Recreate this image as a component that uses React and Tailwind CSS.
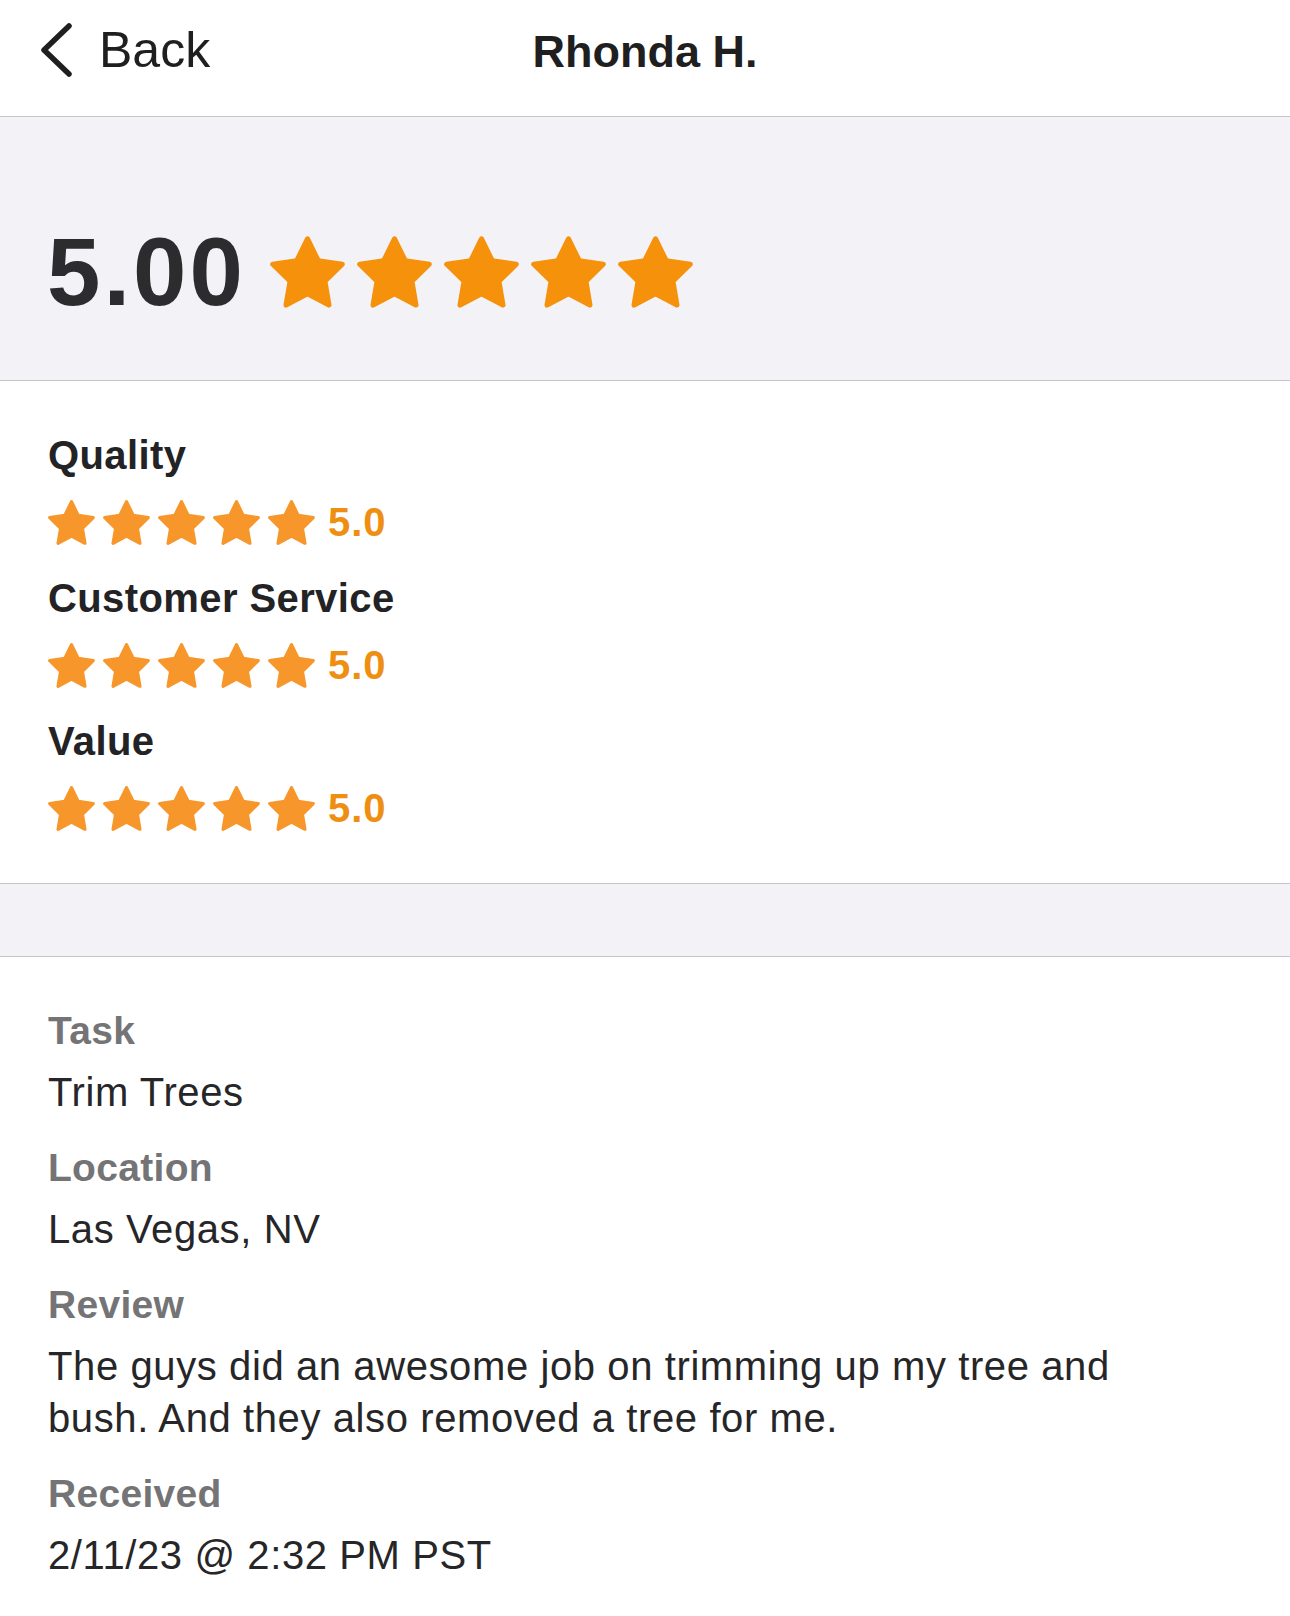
import React from 'react';

const STAR = 'M12 2.6l2.9 5.9 6.5.95-4.7 4.6 1.1 6.45L12 17.45l-5.8 3.05 1.1-6.45-4.7-4.6 6.5-.95L12 2.6z';

function Star({ className }) {
  return (
    <svg viewBox="1.85 1.9 20.3 19.3" className={className}>
      <path d={STAR} fill="currentColor" stroke="currentColor" strokeWidth="1.4" strokeLinejoin="round" />
    </svg>
  );
}

function StarRow({ value }) {
  return (
    <div className="flex items-center h-[48px]">
      <div className="flex gap-[8px] text-[#f7962a]">
        {[0, 1, 2, 3, 4].map((i) => (
          <Star key={i} className="w-[47px] h-[45px]" />
        ))}
      </div>
      <span className="ml-[13px] text-[40px] font-bold tracking-[1px] text-[#ef8f12] leading-none">{value}</span>
    </div>
  );
}

const categories = [
  { name: 'Quality', value: '5.0' },
  { name: 'Customer Service', value: '5.0' },
  { name: 'Value', value: '5.0' },
];

const details = [
  { label: 'Task', value: ['Trim Trees'] },
  { label: 'Location', value: ['Las Vegas, NV'] },
  {
    label: 'Review',
    value: ['The guys did an awesome job on trimming up my tree and', 'bush. And they also removed a tree for me.'],
  },
  { label: 'Received', value: ['2/11/23 @ 2:32 PM PST'] },
];

export default function App() {
  return (
    <div className="w-[1290px] min-h-[1616px] bg-white text-[#2c2c2e] font-['Liberation_Sans',Arial,sans-serif]">
      {/* header */}
      <div className="relative h-[117px] border-b border-[#c6c6c8] flex items-center justify-center">
        <div className="absolute left-[38px] top-[22px] flex items-center h-[56px]">
          <svg viewBox="0 0 36 56" className="w-[36px] h-[56px]">
            <path d="M31 4 L6 28 L31 52" fill="none" stroke="#1f1f1f" strokeWidth="5.5" strokeLinecap="round" strokeLinejoin="round" />
          </svg>
          <span className="ml-[25px] text-[50px] leading-none text-[#1f1f1f]">Back</span>
        </div>
        <h1 className="text-[45px] font-bold leading-none text-[#1f1f1f] -mt-[14px]">Rhonda H.</h1>
      </div>

      {/* overall */}
      <div className="h-[264px] bg-[#f2f2f7] border-b border-[#c6c6c8] flex items-center pl-[47px] pt-[46px]">
        <span className="text-[96px] font-bold leading-none tracking-[3px] text-[#2c2c2e]">5.00</span>
        <div className="flex gap-[12px] ml-[24px] text-[#f5910b]">
          {[0, 1, 2, 3, 4].map((i) => (
            <Star key={i} className="w-[75px] h-[72px]" />
          ))}
        </div>
      </div>

      {/* categories */}
      <div className="pt-[50px] pb-[51px] pl-[48px] border-b border-[#c6c6c8] flex flex-col gap-[28px]">
        {categories.map((c) => (
          <div key={c.name} className="flex flex-col gap-[19px]">
            <div className="h-[48px] flex items-center text-[40px] font-bold tracking-[0.4px] text-[#232325]">{c.name}</div>
            <StarRow value={c.value} />
          </div>
        ))}
      </div>

      <div className="h-[73px] bg-[#f2f2f7] border-b border-[#c6c6c8]" />

      {/* details */}
      <div className="pt-[50px] pl-[48px] flex flex-col gap-[26px]">
        {details.map((d) => (
          <div key={d.label} className="flex flex-col gap-[11px]">
            <div className="h-[48px] flex items-center text-[39px] font-bold tracking-[0.3px] text-[#747476]">{d.label}</div>
            <div className="text-[40px] leading-[52px] tracking-[0.6px] text-[#262628]">
              {d.value.map((line) => (
                <div key={line}>{line}</div>
              ))}
            </div>
          </div>
        ))}
      </div>
    </div>
  );
}
